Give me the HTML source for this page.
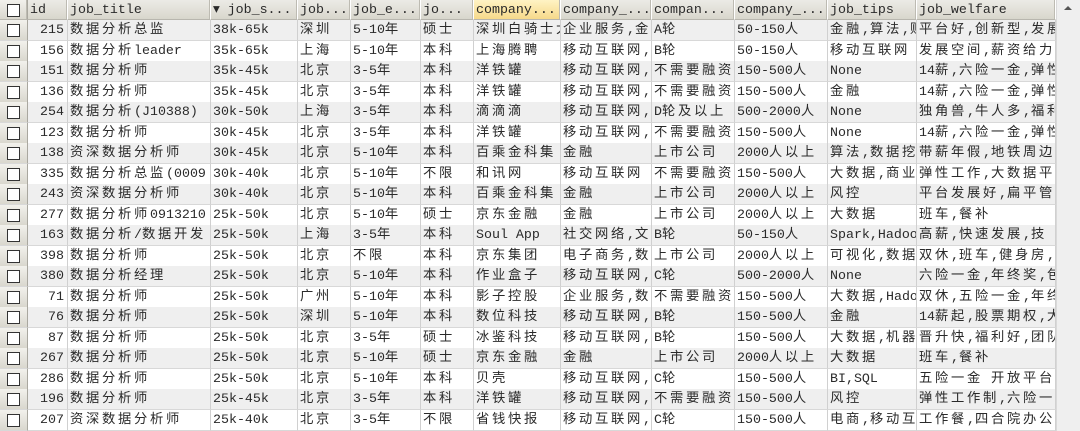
<!DOCTYPE html>
<html><head><meta charset="utf-8"><style>
body{margin:0;width:1080px;height:431px;overflow:hidden;background:#fff;font-family:"Liberation Mono","WenQuanYi Zen Hei","Noto Sans CJK SC",monospace;font-size:13.3px;color:#2a2a2a;position:relative}
.r{position:absolute;left:0;width:1056px;height:21px}
.c{position:absolute;top:0;height:100%;box-sizing:border-box;border-right:1px solid #d0d0d0;border-bottom:1px solid #d8d8d8;white-space:nowrap;overflow:hidden;padding-left:2px;line-height:20px}
.h .c{background:linear-gradient(#ecebe6,#d8d6cc);border-right:1px solid #fff;border-bottom:1px solid #b8b6ae;box-shadow:inset -1px 0 #bdbbb2}
.cb{background:linear-gradient(#f2f1ec,#d9d7ce)!important;border-right:1px solid #a9a79f!important}
.cb i{position:absolute;left:7px;top:4px;width:11px;height:11px;border:1px solid #333;background:#fff}
.g{background:#efefef}
.k{display:inline-block;width:16px;text-align:left}
.num{text-align:right;padding-right:3px}
#sb{position:absolute;left:1056px;top:0;width:24px;height:431px;background:#efefef;border-left:1px solid #d9d9d9}
#th{position:absolute;left:1063px;top:146px;width:13px;height:26px;border:1px solid #999;border-radius:2px;background:linear-gradient(90deg,#f7f7f7,#e2e2e2)}
#th b{position:absolute;left:4px;width:5px;border-top:1px solid #666}
</style></head><body>
<div id="g"></div>
<div id="sb"><div style="position:absolute;left:7px;top:6px;width:0;height:0;border-left:4px solid transparent;border-right:4px solid transparent;border-bottom:4px solid #555"></div><div id="th"><b style="top:9px"></b><b style="top:12px"></b><b style="top:15px"></b></div></div>
<script>
var X=[0,28,68,211,298,351,421,474,561,652,735,828,917,1056];
var H=["","id","job_title","▾ job_s...","job...","job_e...","jo...","company...","company_...","compan...","company_...","job_tips","job_welfare"];
var D=`215|数据分析总监|38k-65k|深圳|5-10年|硕士|深圳白骑士大|企业服务,金|A轮|50-150人|金融,算法,财|平台好,创新型,发展
156|数据分析leader|35k-65k|上海|5-10年|本科|上海腾聘|移动互联网,|B轮|50-150人|移动互联网|发展空间,薪资给力
151|数据分析师|35k-45k|北京|3-5年|本科|洋铁罐|移动互联网,|不需要融资|150-500人|None|14薪,六险一金,弹性
136|数据分析师|35k-45k|北京|3-5年|本科|洋铁罐|移动互联网,|不需要融资|150-500人|金融|14薪,六险一金,弹性
254|数据分析(J10388)|30k-50k|上海|3-5年|本科|滴滴滴|移动互联网,|D轮及以上|500-2000人|None|独角兽,牛人多,福利
123|数据分析师|30k-45k|北京|3-5年|本科|洋铁罐|移动互联网,|不需要融资|150-500人|None|14薪,六险一金,弹性
138|资深数据分析师|30k-45k|北京|5-10年|本科|百乘金科集|金融|上市公司|2000人以上|算法,数据挖|带薪年假,地铁周边
335|数据分析总监(0009|30k-40k|北京|5-10年|不限|和讯网|移动互联网|不需要融资|150-500人|大数据,商业|弹性工作,大数据平
243|资深数据分析师|30k-40k|北京|5-10年|本科|百乘金科集|金融|上市公司|2000人以上|风控|平台发展好,扁平管
277|数据分析师0913210|25k-50k|北京|5-10年|硕士|京东金融|金融|上市公司|2000人以上|大数据|班车,餐补
163|数据分析/数据开发|25k-50k|上海|3-5年|本科|Soul App|社交网络,文|B轮|50-150人|Spark,Hadoo|高薪,快速发展,技
398|数据分析师|25k-50k|北京|不限|本科|京东集团|电子商务,数|上市公司|2000人以上|可视化,数据|双休,班车,健身房,
380|数据分析经理|25k-50k|北京|5-10年|本科|作业盒子|移动互联网,|C轮|500-2000人|None|六险一金,年终奖,包
71|数据分析师|25k-50k|广州|5-10年|本科|影子控股|企业服务,数|不需要融资|150-500人|大数据,Hadoo|双休,五险一金,年终
76|数据分析师|25k-50k|深圳|5-10年|本科|数位科技|移动互联网,|B轮|150-500人|金融|14薪起,股票期权,大
87|数据分析师|25k-50k|北京|3-5年|硕士|冰鉴科技|移动互联网,|B轮|150-500人|大数据,机器|晋升快,福利好,团队
267|数据分析师|25k-50k|北京|5-10年|硕士|京东金融|金融|上市公司|2000人以上|大数据|班车,餐补
286|数据分析师|25k-50k|北京|5-10年|本科|贝壳|移动互联网,|C轮|150-500人|BI,SQL|五险一金 开放平台
196|数据分析师|25k-45k|北京|3-5年|本科|洋铁罐|移动互联网,|不需要融资|150-500人|风控|弹性工作制,六险一
207|资深数据分析师|25k-40k|北京|3-5年|不限|省钱快报|移动互联网,|C轮|150-500人|电商,移动互|工作餐,四合院办公`.split("\n");
function k(s){return s.replace(/[^\x00-\x7f]/g,function(m){return m=="▾"?m:'<span class="k">'+m+'</span>'})}
var o="";
function row(cells,top,cls){var s='<div class="r '+cls+'" style="top:'+top+'px;height:'+(cls=="h"?20:21)+'px">';
for(var i=0;i<13;i++){var w=X[i+1]-X[i];var c="c"+(i==0?" cb":"")+(i==1&&cls!="h"?" num":"");
var st="left:"+X[i]+"px;width:"+w+"px";
if(cls=="h"&&i==7)st+=";background:linear-gradient(#fff3c4,#f6d98a)";
s+='<div class="'+c+'" style="'+st+'">'+(i==0?'<i></i>':k(cells[i]))+'</div>';}
return s+'</div>';}
o+=row(H,0,"h");
D.forEach(function(l,j){var a=[""].concat(l.split("|"));o+=row(a,Math.round(20+j*20.5),j%2==0?"g":"")});
document.getElementById("g").innerHTML=o;
</script>
</body></html>
